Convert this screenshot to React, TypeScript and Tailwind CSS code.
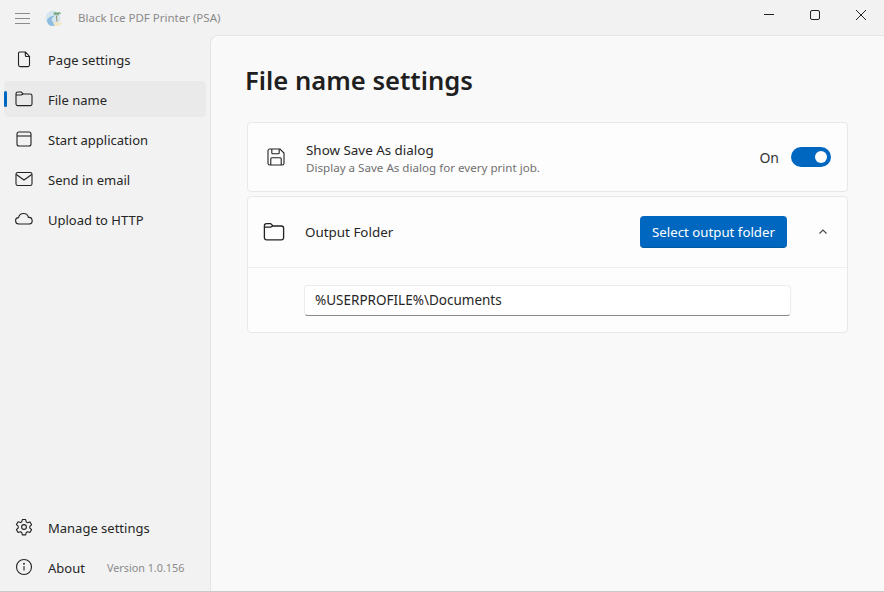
import { ReactNode } from 'react';

const strokeIcon = 'fill-none stroke-[#222] stroke-[1.1]';

function PageIcon() {
    return (
        <svg width="20" height="20" viewBox="0 0 20 20" className={strokeIcon}>
            <path d="M5.500 3h6l4 4.500v8.300a1.800 1.800 0 0 1-1.800 1.800H6.300a1.800 1.800 0 0 1-1.800-1.800V4a1 1 0 0 1 1-1Z M11.300 3v3.200a1.300 1.300 0 0 0 1.300 1.300h2.900" />
        </svg>
    );
}

function FolderIcon({ size = 20 }: { size?: number }) {
    return (
        <svg width={size} height={size} viewBox="0 0 20 20" className={strokeIcon}>
            <path d="M2 4.800A1.800 1.800 0 0 1 3.800 3h3.400l2 2h7a1.800 1.800 0 0 1 1.800 1.800v8a1.800 1.800 0 0 1-1.800 1.800H3.800A1.800 1.800 0 0 1 2 14.800Z M2 6h5.200l2-1" />
        </svg>
    );
}

function WindowIcon() {
    return (
        <svg width="20" height="20" viewBox="0 0 20 20" className={strokeIcon}>
            <rect x="3" y="3" width="14" height="14" rx="2" />
            <path d="M3 7h14" />
        </svg>
    );
}

function MailIcon() {
    return (
        <svg width="20" height="20" viewBox="0 0 20 20" className={strokeIcon}>
            <rect x="2" y="3.500" width="16" height="13" rx="1.800" />
            <path d="m2.300 5.500 7.700 5.500 7.700-5.500" />
        </svg>
    );
}

function CloudIcon() {
    return (
        <svg width="20" height="20" viewBox="0 0 20 20" className={strokeIcon}>
            <path d="M5 15a3 3 0 0 1-.4-6.400 5 5 0 0 1 9.800-.2 3.300 3.300 0 0 1 .9 6.600Z" />
        </svg>
    );
}

function GearIcon() {
    return (
        <svg width="20" height="20" viewBox="0 0 20 20" className={strokeIcon}>
            <circle cx="10" cy="10" r="2.400" />
            <path d="M8.300 2.500h3.400l.5 2.400 1.300.8 2.400-.8 1.700 2.900-1.800 1.600v1.600l1.800 1.600-1.700 2.900-2.400-.8-1.300.8-.5 2.400H8.300l-.5-2.400-1.300-.8-2.400.8-1.700-2.900 1.800-1.600V9.200L2.400 7.600l1.700-2.900 2.400.8 1.300-.8Z" strokeLinejoin="round" />
        </svg>
    );
}

function InfoIcon() {
    return (
        <svg width="20" height="20" viewBox="0 0 20 20" className={strokeIcon}>
            <circle cx="10" cy="10" r="7.500" />
            <path d="M10 9v4.500" />
            <circle cx="10" cy="6.700" r=".4" />
        </svg>
    );
}

function SaveIcon() {
    return (
        <svg width="20" height="20" viewBox="0 0 20 20" className={strokeIcon}>
            <path d="M2 3.800A1.800 1.800 0 0 1 3.800 2h10.200L18 6v10.200a1.800 1.800 0 0 1-1.800 1.800H3.800A1.800 1.800 0 0 1 2 16.200Z" />
            <path d="M5.800 2v3.700a1 1 0 0 0 1 1h5.400a1 1 0 0 0 1-1V2 M4.800 18v-6.200a1 1 0 0 1 1-1h8.400a1 1 0 0 1 1 1V18" />
        </svg>
    );
}

function Logo() {
    return (
        <svg width="18" height="18" viewBox="0 0 18 18">
            <circle cx="8" cy="9" r="7.500" fill="#d5e6ef" />
            <path d="M2 11c2-3 5-5 8-4-3 1-4 3-3 5s4 3 6 2c-2 3-6 4-9 2-1-1-2-3-2-5Z" fill="#8dbce0" />
            <path d="M8 14c2-1 6-1 9 0-1 2-3 3-5 3s-3-1-4-3Z" fill="#f2e6c4" />
            <path d="M11.500 6.500 12 12.500" stroke="#8d8a65" strokeWidth="1" />
            <path d="M8 5c1-2 3-2 4-1 1-1 4-1 4 1-1-.5-2-.5-3 0 1 .5 1 1.500 1 2-1-1-2-1.500-2.500-1.500-1 0-2 .5-2.500 1.500 0-1 .5-2 1-2.500-1 0-1.500.5-2 .5Z" fill="#6a9f70" />
        </svg>
    );
}

function NavItem({ icon, label, active, extra }: { icon: ReactNode; label: string; active?: boolean; extra?: string }) {
    return (
        <div className={`relative mx-[4px] flex h-[36px] items-center rounded-[4px] ${active ? 'bg-[#eaeaea]' : ''}`}>
            {active && <div className="absolute left-0 top-[10px] h-[16px] w-[3px] rounded-full bg-[#0067c0]" />}
            <div className="ml-[10px] flex w-[20px] justify-center">{icon}</div>
            <span className="ml-[14px] pt-[3px] text-[13px] text-[#262626]">{label}</span>
            {extra && <span className="ml-[22px] pt-[2px] text-[10.8px] text-[#8a8a8a]">{extra}</span>}
        </div>
    );
}

export default function App() {
    return (
        <div className="flex h-[592px] w-[884px] flex-col overflow-hidden border-b border-[#c9c9c9] bg-[#f2f2f2] font-['Noto_Sans',sans-serif]">
            <div className="flex h-[36px] shrink-0 items-center">
                <svg width="15" height="11" viewBox="0 0 15 11" className="ml-[15px] fill-none stroke-[#8b8b8b]">
                    <path d="M0 .5h15M0 5.500h15M0 10.500h15" />
                </svg>
                <div className="ml-[15px]"><Logo /></div>
                <span className="ml-[15px] text-[11.5px] text-[#8a8a8a]">Black Ice PDF Printer (PSA)</span>
                <div className="ml-auto flex items-center">
                    <svg width="12" height="12" viewBox="0 0 12 12" className="mb-[6px] mr-[34px] fill-none stroke-[#222]"><path d="M1 5.500h10" /></svg>
                    <svg width="12" height="12" viewBox="0 0 12 12" className="mb-[6px] mr-[34px] fill-none stroke-[#222]"><rect x="1.500" y="1.500" width="9" height="9" rx="1.500" /></svg>
                    <svg width="12" height="12" viewBox="0 0 12 12" className="mb-[6px] mr-[17px] fill-none stroke-[#222]"><path d="m1 1 10 10M11 1 1 11" /></svg>
                </div>
            </div>
            <div className="flex min-h-0 flex-1">
                <aside className="flex w-[210px] shrink-0 flex-col pb-[6px] pt-[5px]">
                    <div className="flex flex-col gap-[4px]">
                        <NavItem icon={<PageIcon />} label="Page settings" />
                        <NavItem icon={<FolderIcon />} label="File name" active />
                        <NavItem icon={<WindowIcon />} label="Start application" />
                        <NavItem icon={<MailIcon />} label="Send in email" />
                        <NavItem icon={<CloudIcon />} label="Upload to HTTP" />
                    </div>
                    <div className="mt-auto flex flex-col gap-[4px]">
                        <NavItem icon={<GearIcon />} label="Manage settings" />
                        <NavItem icon={<InfoIcon />} label="About" extra="Version 1.0.156" />
                    </div>
                </aside>
                <main className="-mt-px flex-1 rounded-tl-[8px] border-l border-t border-[#e5e5e5] bg-[#f9f9f9] pl-[36px] pr-[36px]">
                    <h1 className="-ml-[2px] mt-[25px] text-[25.6px] font-semibold leading-[40px] text-[#1f1f1f]">File name settings</h1>
                    <section className="mt-[21px] flex h-[70px] items-center rounded-[4px] border border-[#e8e8e8] bg-[#fdfdfd] pl-[18px] pr-[16px]">
                        <SaveIcon />
                        <div className="ml-[20px] flex flex-col pt-[2px]">
                            <span className="text-[13.4px] leading-[19px] text-[#262626]">Show Save As dialog</span>
                            <span className="text-[11.6px] leading-[16px] text-[#707070]">Display a Save As dialog for every print job.</span>
                        </div>
                        <span className="ml-auto text-[14px] text-[#333]">On</span>
                        <div className="ml-[12px] flex h-[20px] w-[40px] items-center justify-end rounded-full bg-[#0067c0] pr-[4px]">
                            <div className="h-[12px] w-[12px] rounded-full bg-white" />
                        </div>
                    </section>
                    <section className="mt-[4px] rounded-[4px] border border-[#e8e8e8] bg-[#fdfdfd]">
                        <div className="flex h-[71px] items-center border-b border-[#eeeeee] pl-[14px] pr-[16px]">
                            <FolderIcon size={24} />
                            <span className="ml-[19px] text-[13.4px] text-[#262626]">Output Folder</span>
                            <button className="ml-auto flex h-[32px] w-[147px] items-center justify-center rounded-[4px] border-b border-[#00589f] bg-[#0067c0] pt-[2px] text-[13.25px] text-white">Select output folder</button>
                            <svg width="12" height="12" viewBox="0 0 12 12" className="ml-[30px] mr-[2px] fill-none stroke-[#444] stroke-[1.1]"><path d="m2.500 7.500 3.500-3.500 3.500 3.500" /></svg>
                        </div>
                        <div className="flex h-[64px] items-center pl-[56px]">
                            <div className="flex h-[31px] w-[487px] items-center rounded-[4px] border border-[#ececec] border-b-[#8a8a8a] bg-white pl-[10px] pt-[1px] text-[13.5px] text-[#262626]">%USERPROFILE%\Documents</div>
                        </div>
                    </section>
                </main>
            </div>
        </div>
    );
}
